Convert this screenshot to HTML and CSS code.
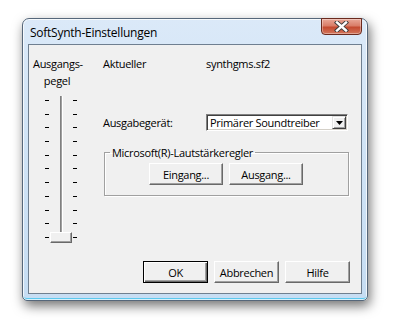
FILE: index.html
```html
<!DOCTYPE html>
<html>
<head>
<meta charset="utf-8">
<link rel="stylesheet" href="styles.css">
</head>
<body>
<div class="desk">
  <div class="window">
    <div class="titlebar">
      <span class="title">SoftSynth-Einstellungen</span>
      <div class="close">
        <svg width="17" height="11" viewBox="0 0 17 11">
          <path d="M4 1.5 L13 9.5 M13 1.5 L4 9.5" stroke="#3a3a3a" stroke-width="4.2" stroke-linecap="square" fill="none"/>
          <path d="M4 1.5 L13 9.5 M13 1.5 L4 9.5" stroke="#ffffff" stroke-width="2.4" stroke-linecap="square" fill="none"/>
        </svg>
      </div>
    </div>
    <div class="client">
      <div class="main">
        <div class="level">
          <div class="level-label">Ausgangs-<br>pegel</div>
          <div class="slider">
            <div class="ticks ticks-left">
              <i></i><i></i><i></i><i></i><i></i><i></i><i></i><i></i><i></i><i></i><i></i>
            </div>
            <div class="track"></div>
            <div class="ticks ticks-right">
              <i></i><i></i><i></i><i></i><i></i><i></i><i></i><i></i><i></i><i></i><i></i>
            </div>
            <div class="thumb"></div>
          </div>
        </div>
        <div class="settings">
          <div class="row current">
            <span class="cell-label">Aktueller</span>
            <span>synthgms.sf2</span>
          </div>
          <div class="row device">
            <span class="cell-label">Ausgabegerät:</span>
            <div class="combo">
              <span class="combo-text">Primärer Soundtreiber</span>
              <span class="combo-btn">
                <svg width="7" height="4" viewBox="0 0 7 4"><path d="M0 0 H7 L3.5 4 Z" fill="#000"/></svg>
              </span>
            </div>
          </div>
          <fieldset class="group">
            <legend>Microsoft(R)-Lautstärkeregler</legend>
            <div class="group-buttons">
              <button class="btn btn-wide">Eingang...</button>
              <button class="btn btn-wide">Ausgang...</button>
            </div>
          </fieldset>
        </div>
      </div>
      <div class="actions">
        <button class="btn btn-default">OK</button>
        <button class="btn">Abbrechen</button>
        <button class="btn">Hilfe</button>
      </div>
    </div>
  </div>
</div>
</body>
</html>
```

FILE: styles.css
```css
* { box-sizing: border-box; }
html, body {
  margin: 0;
  background: #ffffff;
}
body {
  width: 403px;
  height: 331px;
  overflow: hidden;
  font-family: "Open Sans", "Noto Sans", sans-serif;
  font-size: 11px;
  letter-spacing: -0.3px;
  color: #000;
}
.desk {
  padding: 18px 0 0 22px;
}
.window {
  width: 346px;
  height: 283px;
  border: 1px solid #56677a;
  border-radius: 7px 7px 5px 5px;
  background: linear-gradient(180deg, #dbe9f8 0%, #d1e4f6 40%, #c6ddf3 100%);
  box-shadow: 2px 5px 12px rgba(0, 0, 0, 0.55), inset 0 0 0 1px rgba(255,255,255,0.75), inset 0 -2px 0 #5cc8ee;
  padding: 0 5px 6px 5px;
  display: flex;
  flex-direction: column;
}
.titlebar {
  height: 25px;
  display: flex;
  justify-content: space-between;
  align-items: flex-start;
}
.title {
  font-size: 12px;
  letter-spacing: -0.25px;
  padding: 5px 0 0 2px;
  color: #000;
}
.close {
  width: 41px;
  height: 17px;
  margin-top: -1px;
  border: 1px solid #6a2a1e;
  border-radius: 0 0 4px 4px;
  background: linear-gradient(180deg, #e9a898 0%, #d97d68 45%, #c44a30 55%, #d3765c 100%);
  box-shadow: inset 0 0 0 1px rgba(255,255,255,0.35);
  display: flex;
  align-items: center;
  justify-content: center;
}
.client {
  flex: 1;
  background: #f0f0f0;
  border: 1px solid #6f7f90;
  display: flex;
  flex-direction: column;
}
.main {
  flex: 1;
  display: flex;
}
.level {
  margin-left: 4px;
  width: 48px;
  padding-top: 10px;
}
.level-label {
  text-align: center;
  line-height: 17px;
}
.slider {
  position: relative;
  margin: 7px 0 0 12px;
  width: 32px;
  height: 148px;
  display: flex;
  justify-content: space-between;
}
.ticks {
  width: 4px;
  height: 138px;
  margin-top: 4px;
  display: flex;
  flex-direction: column;
  justify-content: space-between;
}
.ticks i {
  display: block;
  width: 4px;
  height: 1px;
  background: #000;
}
.track {
  width: 3px;
  height: 140px;
  border-left: 1px solid #808080;
  border-right: 1px solid #ffffff;
  background: #a0a0a0;
}
.thumb {
  position: absolute;
  left: 5px;
  top: 136px;
  width: 22px;
  height: 11px;
  background: #f0f0f0;
  border-top: 1px solid #ffffff;
  border-left: 1px solid #ffffff;
  border-right: 1px solid #696969;
  border-bottom: 1px solid #696969;
  box-shadow: inset -1px -1px 0 #a0a0a0;
}
.settings {
  margin-left: 22px;
  padding-top: 10px;
  width: 245px;
}
.row {
  display: flex;
  align-items: center;
}
.current {
  line-height: 17px;
}
.cell-label {
  width: 103px;
}
.device {
  margin-top: 42px;
}
.combo {
  width: 142px;
  height: 17px;
  background: #fff;
  border-top: 1px solid #808080;
  border-left: 1px solid #808080;
  border-right: 1px solid #ffffff;
  border-bottom: 1px solid #ffffff;
  box-shadow: inset 1px 1px 0 #404040, inset -1px -1px 0 #d4d0c8;
  display: flex;
  align-items: center;
  justify-content: space-between;
  padding: 1px 1px 1px 3px;
}
.combo-text {
  line-height: 13px;
}
.combo-btn {
  width: 14px;
  height: 13px;
  background: #f0f0f0;
  border-top: 1px solid #e3e3e3;
  border-left: 1px solid #e3e3e3;
  border-right: 1px solid #404040;
  border-bottom: 1px solid #404040;
  box-shadow: inset 1px 1px 0 #ffffff, inset -1px -1px 0 #a0a0a0;
  display: flex;
  align-items: center;
  justify-content: center;
}
.group {
  margin: 14px 0 0 1px;
  padding: 3px 0 0 0;
  width: 245px;
  height: 51px;
  border: 1px solid #a0a0a0;
  box-shadow: 1px 1px 0 #ffffff, inset 1px 1px 0 #ffffff;
  min-inline-size: 0;
}
.group legend {
  margin-left: 5px;
  padding: 0 2px;
  line-height: 15px;
}
.group-buttons {
  display: flex;
  justify-content: flex-start;
  gap: 6px;
  padding-left: 44px;
}
.btn {
  font-family: inherit;
  font-size: 11px;
  letter-spacing: -0.3px;
  color: #000;
  width: 65px;
  height: 22px;
  padding: 0;
  margin: 0;
  background: #f0f0f0;
  border-top: 1px solid #ffffff;
  border-left: 1px solid #ffffff;
  border-right: 1px solid #696969;
  border-bottom: 1px solid #696969;
  box-shadow: inset -1px -1px 0 #a0a0a0;
}
.btn-wide {
  width: 74px;
}
.btn-default {
  border: 1px solid #000;
  box-shadow: inset 1px 1px 0 #ffffff, inset -1px -1px 0 #696969, inset -2px -2px 0 #a0a0a0;
}
.actions {
  display: flex;
  justify-content: flex-end;
  gap: 6px;
  padding: 0 11px 10px 0;
}
```
